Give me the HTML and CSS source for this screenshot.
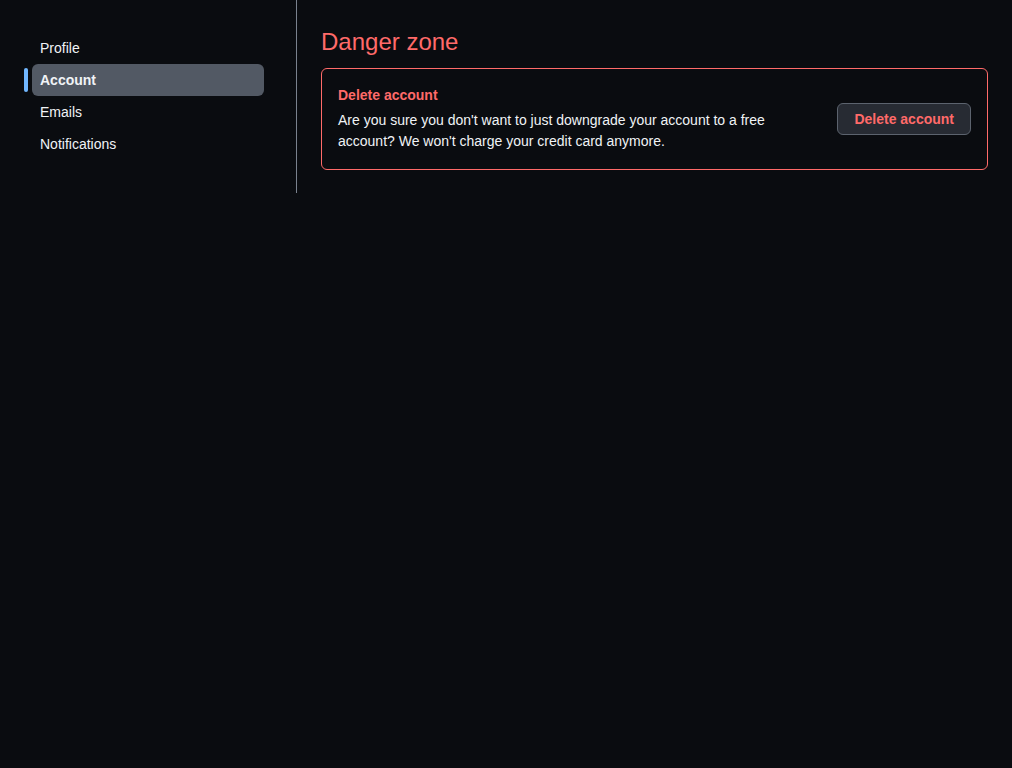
FILE: index.html
```html
<!DOCTYPE html>
<html lang="en">
<head>
<meta charset="utf-8">
<title>Settings</title>
<link rel="stylesheet" href="styles.css">
</head>
<body>
<div class="layout">
  <nav class="sidebar">
    <ul class="nav">
      <li class="nav-item"><a href="#">Profile</a></li>
      <li class="nav-item active"><a href="#">Account</a></li>
      <li class="nav-item"><a href="#">Emails</a></li>
      <li class="nav-item"><a href="#">Notifications</a></li>
    </ul>
  </nav>
  <main class="main">
    <h2 class="title">Danger zone</h2>
    <div class="danger-box">
      <div class="danger-text">
        <div class="danger-title">Delete account</div>
        <p class="danger-desc">Are you sure you don't want to just downgrade your account to a free account? We won't charge your credit card anymore.</p>
      </div>
      <button class="btn-danger" type="button">Delete account</button>
    </div>
  </main>
</div>
</body>
</html>
```
FILE: styles.css
```css
* { box-sizing: border-box; }
html, body { margin: 0; padding: 0; }
body {
  background: #0a0c10;
  color: #f0f3f6;
  font-family: "Liberation Sans", Arial, sans-serif;
  font-size: 14px;
  line-height: 21px;
  min-height: 768px;
}
.layout {
  display: flex;
  align-items: flex-start;
}
.sidebar {
  width: 297px;
  flex-shrink: 0;
  padding: 32px 32px 32px 24px;
  border-right: 1px solid #7a828e;
  height: 193px;
}
.nav {
  list-style: none;
  margin: 0;
  padding: 0 0 0 8px;
}
.nav-item {
  position: relative;
  height: 32px;
  border-radius: 6px;
}
.nav-item a {
  display: block;
  padding: 0 8px;
  line-height: 32px;
  color: #f0f3f6;
  text-decoration: none;
}
.nav-item.active {
  background: #525964;
}
.nav-item.active a { font-weight: bold; }
.nav-item.active::before {
  content: "";
  position: absolute;
  left: -8px;
  top: 4px;
  width: 4px;
  height: 24px;
  border-radius: 6px;
  background: #71b7ff;
}
.main {
  flex: 1;
  padding: 24px 24px 24px 24px;
}
.title {
  margin: 0 0 8px;
  font-size: 24px;
  line-height: 36px;
  font-weight: normal;
  color: #ff6a69;
}
.danger-box {
  display: flex;
  align-items: center;
  border: 1px solid #ff6a69;
  border-radius: 6px;
  padding: 16px 16px 17px;
}
.danger-text {
  max-width: 470px;
}
.danger-title {
  font-weight: bold;
  color: #ff6a69;
  margin-bottom: 4px;
}
.danger-desc {
  margin: 0;
}
.btn-danger {
  margin-left: auto;
  height: 32px;
  padding: 0 16px;
  background: #272b33;
  border: 1px solid #5c636e;
  border-radius: 6px;
  color: #ff6a69;
  font-family: inherit;
  font-size: 14px;
  font-weight: bold;
  cursor: pointer;
}
```
